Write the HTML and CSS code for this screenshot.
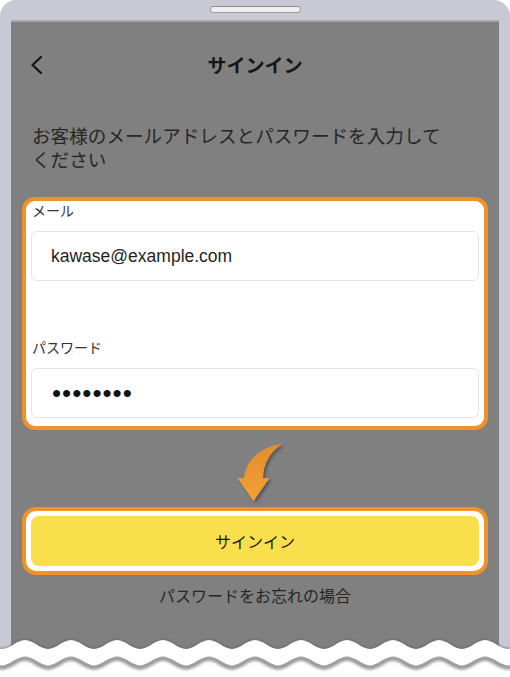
FILE: index.html
```html
<!DOCTYPE html>
<html lang="ja">
<head>
<meta charset="utf-8">
<title>サインイン</title>
<link rel="stylesheet" href="styles.css">
</head>
<body>
<div class="phone">
  <div class="bezel"><div class="speaker"></div></div>
  <div class="screen">
    <header class="nav">
      <svg class="back" width="14" height="20" viewBox="0 0 14 20"><polyline points="11,2 2.5,10 11,18" fill="none" stroke="#161616" stroke-width="2.3" stroke-linecap="round" stroke-linejoin="round"/></svg>
      <h1 class="title">サインイン</h1>
      <span class="nav-spacer"></span>
    </header>
    <p class="lead">お客様のメールアドレスとパスワードを入力してください</p>
    <div class="card">
      <div class="field">
        <div class="label">メール</div>
        <div class="input">kawase@example.com</div>
      </div>
      <div class="field field-pw">
        <div class="label">パスワード</div>
        <div class="input pw">••••••••</div>
      </div>
    </div>
    <div class="arrow-row">
      <svg width="60" height="66" viewBox="0 0 60 66">
        <defs>
          <linearGradient id="ag" x1="0" y1="0" x2="0" y2="1">
            <stop offset="0" stop-color="#e38d2d"/>
            <stop offset="1" stop-color="#f2a233"/>
          </linearGradient>
          <filter id="ds" x="-30%" y="-30%" width="160%" height="160%">
            <feDropShadow dx="2" dy="2" stdDeviation="1.6" flood-color="#000" flood-opacity="0.35"/>
          </filter>
        </defs>
        <path d="M52,4 C38,5 16,16 14,38 L7.5,38 L23.5,61 L39.5,38 L33,38 C33,24 40,12 52,4 Z" fill="url(#ag)" filter="url(#ds)"/>
      </svg>
    </div>
    <div class="btn-ring">
      <div class="btn">サインイン</div>
    </div>
    <p class="forgot">パスワードをお忘れの場合</p>
  </div>
  <svg class="tear" width="510" height="49" viewBox="0 0 510 49">
    <defs>
      <filter id="blur1" x="-5%" y="-50%" width="110%" height="200%"><feGaussianBlur stdDeviation="1.3"/></filter>
      <filter id="blur2" x="-5%" y="-50%" width="110%" height="200%"><feGaussianBlur stdDeviation="1.8"/></filter>
      <clipPath id="below2">
        <path d="M-21,29 c8.4,0 14.6,9 23,9 s14.6,-9 23,-9 s14.6,9 23,9 s14.6,-9 23,-9 s14.6,9 23,9 s14.6,-9 23,-9 s14.6,9 23,9 s14.6,-9 23,-9 s14.6,9 23,9 s14.6,-9 23,-9 s14.6,9 23,9 s14.6,-9 23,-9 s14.6,9 23,9 s14.6,-9 23,-9 s14.6,9 23,9 s14.6,-9 23,-9 s14.6,9 23,9 s14.6,-9 23,-9 s14.6,9 23,9 s14.6,-9 23,-9 s14.6,9 23,9 s14.6,-9 23,-9 s14.6,9 23,9 s14.6,-9 23,-9 L531,60 L-21,60 Z"/>
      </clipPath>
    </defs>
    <path transform="translate(0,-1)" fill="#5a5a5a" opacity="0.6" filter="url(#blur1)" d="M-21,12 c8.4,0 14.6,9 23,9 s14.6,-9 23,-9 s14.6,9 23,9 s14.6,-9 23,-9 s14.6,9 23,9 s14.6,-9 23,-9 s14.6,9 23,9 s14.6,-9 23,-9 s14.6,9 23,9 s14.6,-9 23,-9 s14.6,9 23,9 s14.6,-9 23,-9 s14.6,9 23,9 s14.6,-9 23,-9 s14.6,9 23,9 s14.6,-9 23,-9 s14.6,9 23,9 s14.6,-9 23,-9 s14.6,9 23,9 s14.6,-9 23,-9 s14.6,9 23,9 s14.6,-9 23,-9 s14.6,9 23,9 s14.6,-9 23,-9 L531,60 L-21,60 Z"/>
    <path fill="#ffffff" d="M-21,12 c8.4,0 14.6,9 23,9 s14.6,-9 23,-9 s14.6,9 23,9 s14.6,-9 23,-9 s14.6,9 23,9 s14.6,-9 23,-9 s14.6,9 23,9 s14.6,-9 23,-9 s14.6,9 23,9 s14.6,-9 23,-9 s14.6,9 23,9 s14.6,-9 23,-9 s14.6,9 23,9 s14.6,-9 23,-9 s14.6,9 23,9 s14.6,-9 23,-9 s14.6,9 23,9 s14.6,-9 23,-9 s14.6,9 23,9 s14.6,-9 23,-9 s14.6,9 23,9 s14.6,-9 23,-9 s14.6,9 23,9 s14.6,-9 23,-9 L531,60 L-21,60 Z"/>
    <g clip-path="url(#below2)">
      <path transform="translate(0,1.5)" fill="none" stroke="#8a8a8a" stroke-width="4" filter="url(#blur2)" d="M-21,29 c8.4,0 14.6,9 23,9 s14.6,-9 23,-9 s14.6,9 23,9 s14.6,-9 23,-9 s14.6,9 23,9 s14.6,-9 23,-9 s14.6,9 23,9 s14.6,-9 23,-9 s14.6,9 23,9 s14.6,-9 23,-9 s14.6,9 23,9 s14.6,-9 23,-9 s14.6,9 23,9 s14.6,-9 23,-9 s14.6,9 23,9 s14.6,-9 23,-9 s14.6,9 23,9 s14.6,-9 23,-9 s14.6,9 23,9 s14.6,-9 23,-9 s14.6,9 23,9 s14.6,-9 23,-9 s14.6,9 23,9 s14.6,-9 23,-9"/>
    </g>
    <path fill="none" stroke="#9a9a9a" stroke-width="1.2" d="M-21,29 c8.4,0 14.6,9 23,9 s14.6,-9 23,-9 s14.6,9 23,9 s14.6,-9 23,-9 s14.6,9 23,9 s14.6,-9 23,-9 s14.6,9 23,9 s14.6,-9 23,-9 s14.6,9 23,9 s14.6,-9 23,-9 s14.6,9 23,9 s14.6,-9 23,-9 s14.6,9 23,9 s14.6,-9 23,-9 s14.6,9 23,9 s14.6,-9 23,-9 s14.6,9 23,9 s14.6,-9 23,-9 s14.6,9 23,9 s14.6,-9 23,-9 s14.6,9 23,9 s14.6,-9 23,-9 s14.6,9 23,9 s14.6,-9 23,-9"/>
  </svg>
</div>
</body>
</html>
```

FILE: styles.css
```css
html, body {
  margin: 0;
  padding: 0;
  background: #ffffff;
}

body {
  font-family: "Liberation Sans", "Noto Sans CJK JP", sans-serif;
  color: #222222;
  overflow: hidden;
}

.phone {
  position: relative;
  width: 510px;
  height: 677px;
  background: #c9c9d6;
  border-radius: 16px 16px 0 0;
  overflow: hidden;
}

.bezel {
  height: 20px;
  display: flex;
  justify-content: center;
  align-items: flex-start;
  padding-top: 6px;
  box-sizing: border-box;
}

.speaker {
  width: 89px;
  height: 5px;
  border: 1px solid #9c9c9c;
  border-top-color: #8e8e8e;
  border-radius: 4px;
  background: #eeeeee;
}

.screen {
  margin: 0 11px;
  height: 655px;
  background: #808080;
  border-top: 2px solid #a7a7a7;
  display: flex;
  flex-direction: column;
}

.nav {
  height: 90px;
  display: grid;
  grid-template-columns: 1fr auto 1fr;
  align-items: center;
}

.back {
  justify-self: start;
  margin-left: 19px;
  margin-bottom: 4px;
  display: block;
}

.title {
  margin: 0;
  font-size: 19px;
  font-weight: bold;
  color: #161616;
  line-height: 24px;
}

.lead {
  margin: 13px 0 0 21px;
  max-width: 416px;
  font-size: 18.6px;
  line-height: 24px;
  color: #262626;
}

.card {
  margin: 24px 11px 0;
  border: 4px solid #ef9229;
  border-radius: 13px;
  background: #ffffff;
  padding: 1px 5px 8px;
}

.field-pw {
  margin-top: 58px;
}

.label {
  font-size: 14px;
  line-height: 18px;
  color: #333333;
  padding-left: 1px;
  margin-bottom: 11px;
}

.input {
  height: 50px;
  box-sizing: border-box;
  border: 1.5px solid #e4e4e4;
  border-radius: 6px;
  padding-left: 19px;
  display: flex;
  align-items: center;
  font-size: 17.5px;
  color: #1f1f1f;
}

.pw {
  font-size: 26px;
  letter-spacing: 1px;
  color: #111111;
  padding-left: 20px;
}

.arrow-row {
  height: 77px;
  box-sizing: border-box;
  padding: 10px 0 0 219px;
}

.arrow-row svg {
  display: block;
  overflow: visible;
}

.btn-ring {
  margin: 0 11px;
  border: 4px solid #ef9229;
  border-radius: 14px;
  background: #ffffff;
  padding: 5px;
}

.btn {
  height: 50px;
  border-radius: 8px;
  background: #f9df4c;
  display: flex;
  align-items: center;
  justify-content: center;
  font-size: 16px;
  color: #1c1c1c;
}

.forgot {
  margin: 10px 0 0;
  text-align: center;
  font-size: 16px;
  line-height: 24px;
  color: #262626;
}

.tear {
  position: absolute;
  left: 0;
  top: 628px;
  display: block;
}
```
